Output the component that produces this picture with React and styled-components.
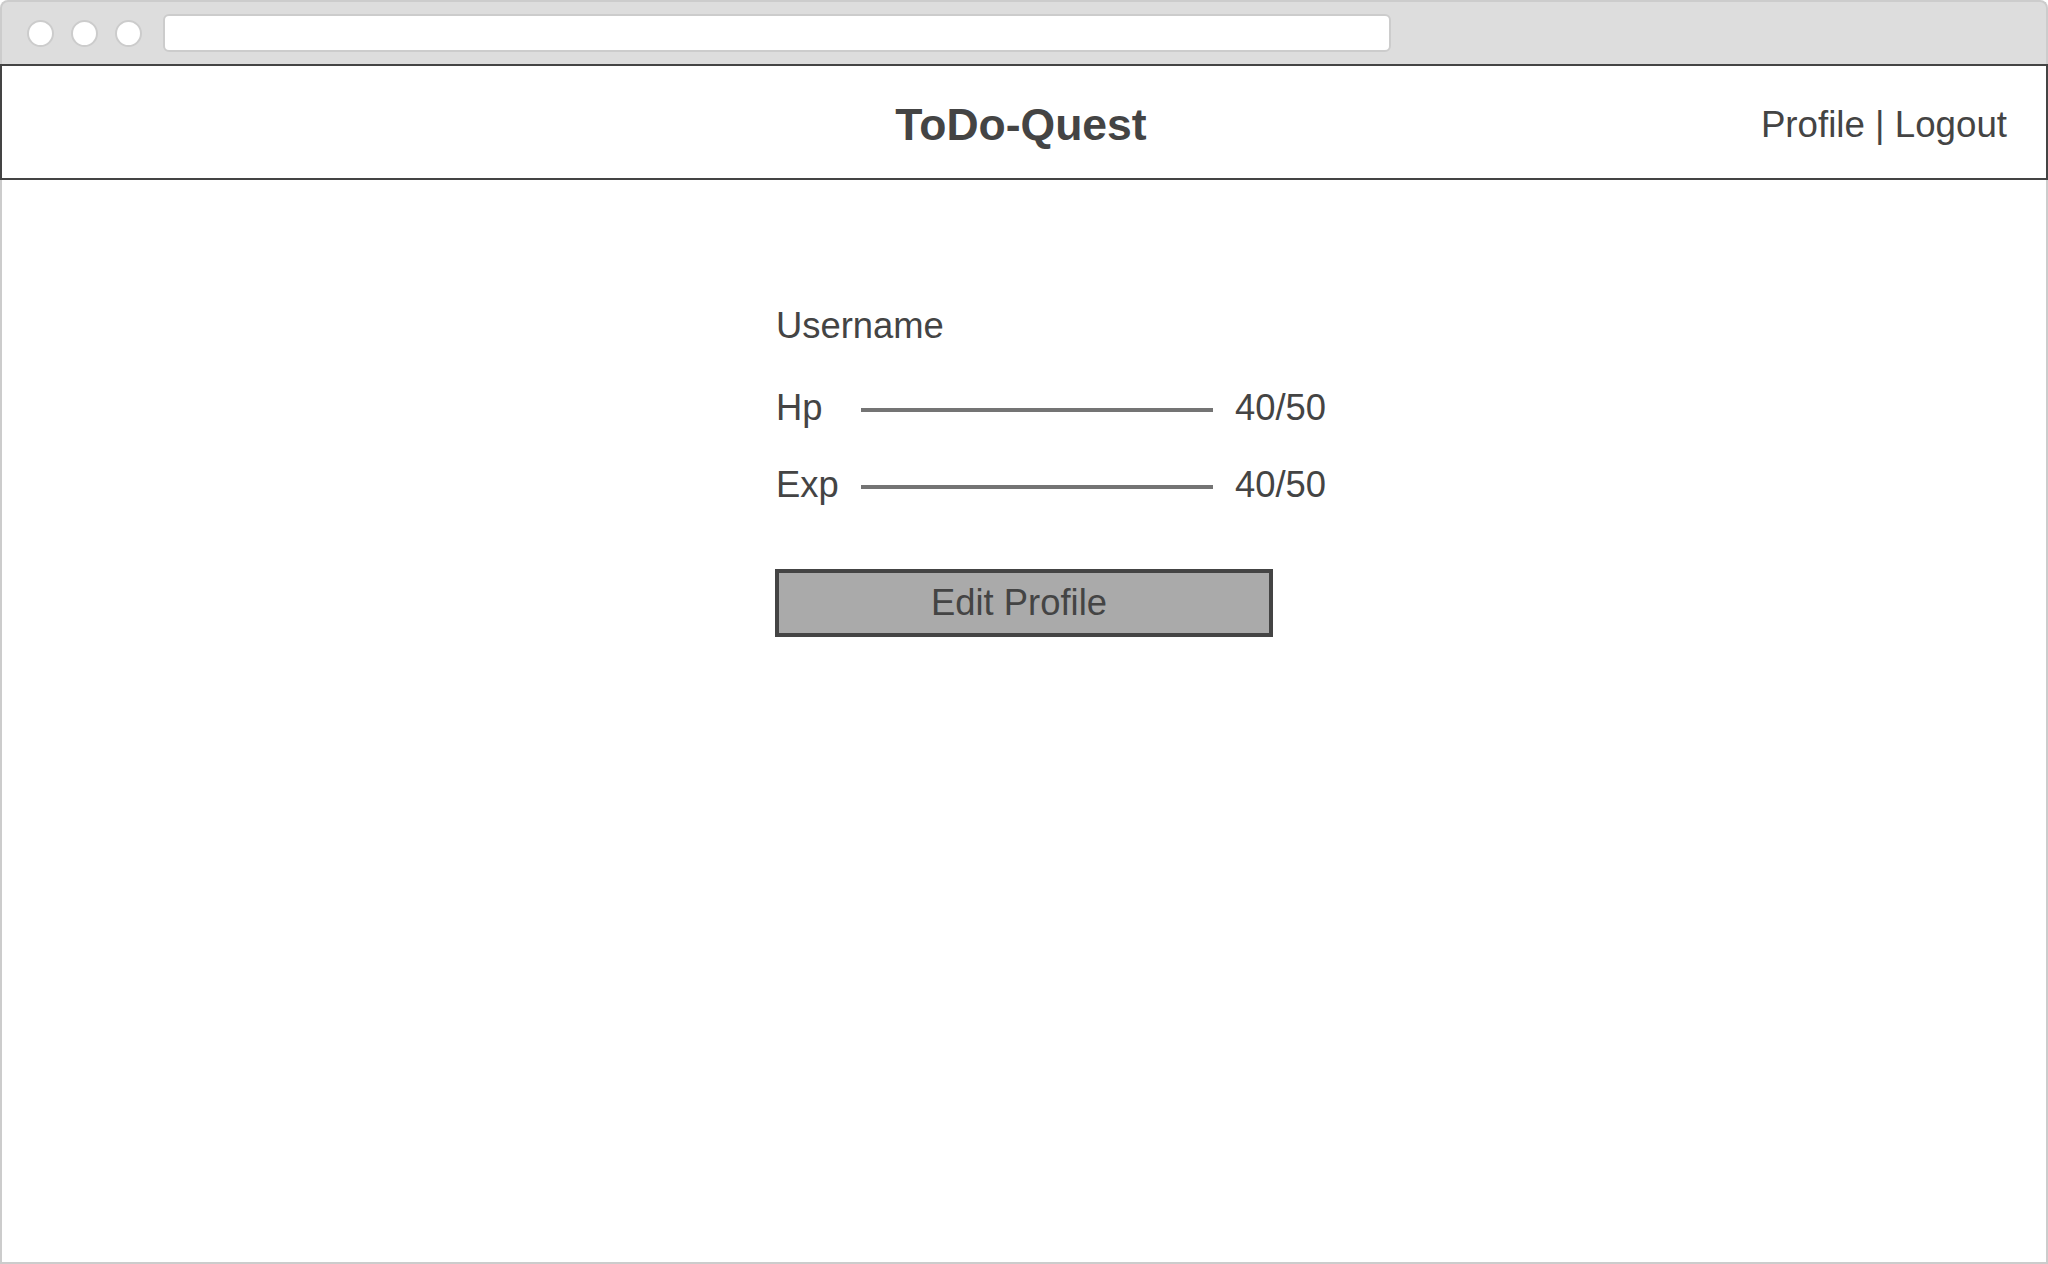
import React from 'react';
import styled, { createGlobalStyle } from 'styled-components';

const GlobalStyle = createGlobalStyle`
  html, body {
    margin: 0;
    padding: 0;
    background: #fff;
  }
  body {
    font-family: "Liberation Sans", Arial, sans-serif;
    color: #444;
  }
  * {
    box-sizing: border-box;
  }
`;

const Window = styled.div`
  display: flex;
  flex-direction: column;
  width: 2048px;
  height: 1264px;
`;

const TitleBar = styled.div`
  display: flex;
  align-items: center;
  height: 64px;
  padding-left: 25px;
  background: #ddd;
  border: 2px solid #ccc;
  border-bottom: none;
  border-radius: 8px 8px 0 0;
`;

const Dot = styled.span`
  width: 27px;
  height: 27px;
  margin-right: 17px;
  border-radius: 50%;
  background: #fff;
  border: 2px solid #ccc;
`;

const AddressBar = styled.div`
  width: 1228px;
  height: 38px;
  margin-left: 4px;
  background: #fff;
  border: 2px solid #ccc;
  border-radius: 6px;
`;

const Header = styled.header`
  display: grid;
  grid-template-columns: 1fr auto 1fr;
  align-items: center;
  height: 116px;
  padding: 5px 39px 0;
  border: 2px solid #444;
`;

const Title = styled.h1`
  grid-column: 2;
  margin: 2px 6px 0 0;
  font-size: 44.5px;
  font-weight: bold;
  line-height: 1;
  color: #444;
`;

const Nav = styled.nav`
  grid-column: 3;
  justify-self: end;
  font-size: 36.7px;
  line-height: 36px;
  color: #444;
`;

const Body = styled.main`
  flex: 1;
  padding-top: 128px;
  border: 2px solid #ccc;
  border-top: none;
`;

const Panel = styled.section`
  display: flex;
  flex-direction: column;
  width: 498px;
  margin: 0 auto;
  font-size: 36.4px;
  line-height: 36px;
`;

const Username = styled.div`
  margin-bottom: 46px;
  padding-left: 1px;
`;

const Stats = styled.div`
  display: flex;
  flex-direction: column;
  gap: 41px;
`;

const StatRow = styled.div`
  display: grid;
  grid-template-columns: 63px 352px max-content;
  column-gap: 22px;
  align-items: center;
  padding-left: 1px;
`;

const Bar = styled.div`
  height: 4px;
  margin-top: 4px;
  background: #747474;
`;

const Button = styled.button`
  height: 68px;
  margin-top: 66px;
  padding: 0 10px 0 0;
  background: #aaa;
  border: 4px solid #444;
  font-family: inherit;
  font-size: 36.4px;
  line-height: 36px;
  color: #444;
  cursor: pointer;
`;

const stats = [
  { label: 'Hp', value: '40/50' },
  { label: 'Exp', value: '40/50' },
];

export default function App() {
  return (
    <>
      <GlobalStyle />
      <Window>
        <TitleBar>
          <Dot />
          <Dot />
          <Dot />
          <AddressBar />
        </TitleBar>
        <Header>
          <Title>ToDo-Quest</Title>
          <Nav>Profile | Logout</Nav>
        </Header>
        <Body>
          <Panel>
            <Username>Username</Username>
            <Stats>
              {stats.map(s => (
                <StatRow key={s.label}>
                  <span>{s.label}</span>
                  <Bar />
                  <span>{s.value}</span>
                </StatRow>
              ))}
            </Stats>
            <Button>Edit Profile</Button>
          </Panel>
        </Body>
      </Window>
    </>
  );
}
